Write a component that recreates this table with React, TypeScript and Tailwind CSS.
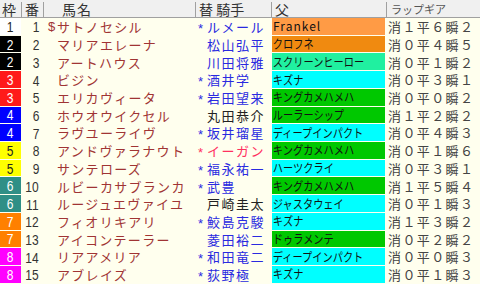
import React from "react";

type Row = {
  waku: number;
  no: number;
  mark: string;
  name: string;
  star: boolean;
  jockey: string;
  jockeyColor: string;
  sire: string;
  sireBg: string;
  lap: string;
};

const GREEN = "bg-[#00c800]";
const CYAN = "bg-[#00ffff]";
const BLUE = "text-[#2a2ae0]";

const rows: Row[] = [
  { waku: 1, no: 1, mark: "$", name: "サトノセシル", star: true, jockey: "ルメール", jockeyColor: BLUE, sire: "Frankel", sireBg: "bg-[#ff9b45]", lap: "消１平６瞬２" },
  { waku: 2, no: 2, mark: "", name: "マリアエレーナ", star: false, jockey: "松山弘平", jockeyColor: BLUE, sire: "クロフネ", sireBg: "bg-[#f08a10]", lap: "消０平４瞬５" },
  { waku: 2, no: 3, mark: "", name: "アートハウス", star: false, jockey: "川田将雅", jockeyColor: BLUE, sire: "スクリーンヒーロー", sireBg: "bg-[#20f0a0]", lap: "消０平１瞬２" },
  { waku: 3, no: 4, mark: "", name: "ビジン", star: true, jockey: "酒井学", jockeyColor: BLUE, sire: "キズナ", sireBg: CYAN, lap: "消０平３瞬１" },
  { waku: 3, no: 5, mark: "", name: "エリカヴィータ", star: true, jockey: "岩田望来", jockeyColor: BLUE, sire: "キングカメハメハ", sireBg: GREEN, lap: "消０平０瞬２" },
  { waku: 4, no: 6, mark: "", name: "ホウオウイクセル", star: false, jockey: "丸田恭介", jockeyColor: "text-[#222222]", sire: "ルーラーシップ", sireBg: GREEN, lap: "消１平２瞬２" },
  { waku: 4, no: 7, mark: "", name: "ラヴユーライヴ", star: true, jockey: "坂井瑠星", jockeyColor: BLUE, sire: "ディープインパクト", sireBg: CYAN, lap: "消０平４瞬３" },
  { waku: 5, no: 8, mark: "", name: "アンドヴァラナウト", star: true, jockey: "イーガン", jockeyColor: "text-[#ff3060]", sire: "キングカメハメハ", sireBg: GREEN, lap: "消０平１瞬６" },
  { waku: 5, no: 9, mark: "", name: "サンテローズ", star: true, jockey: "福永祐一", jockeyColor: BLUE, sire: "ハーツクライ", sireBg: CYAN, lap: "消０平３瞬１" },
  { waku: 6, no: 10, mark: "", name: "ルビーカサブランカ", star: true, jockey: "武豊", jockeyColor: BLUE, sire: "キングカメハメハ", sireBg: GREEN, lap: "消１平５瞬４" },
  { waku: 6, no: 11, mark: "", name: "ルージュエヴァイユ", star: false, jockey: "戸崎圭太", jockeyColor: "text-[#222222]", sire: "ジャスタウェイ", sireBg: CYAN, lap: "消０平１瞬３" },
  { waku: 7, no: 12, mark: "", name: "フィオリキアリ", star: true, jockey: "鮫島克駿", jockeyColor: BLUE, sire: "キズナ", sireBg: CYAN, lap: "消１平３瞬２" },
  { waku: 7, no: 13, mark: "", name: "アイコンテーラー", star: false, jockey: "菱田裕二", jockeyColor: BLUE, sire: "ドゥラメンテ", sireBg: GREEN, lap: "消０平２瞬２" },
  { waku: 8, no: 14, mark: "", name: "リアアメリア", star: true, jockey: "和田竜二", jockeyColor: BLUE, sire: "ディープインパクト", sireBg: CYAN, lap: "消０平０瞬３" },
  { waku: 8, no: 15, mark: "", name: "アブレイズ", star: true, jockey: "荻野極", jockeyColor: BLUE, sire: "キズナ", sireBg: CYAN, lap: "消０平１瞬３" },
];

const wakuStyle: Record<number, string> = {
  1: "bg-white text-[#222222]",
  2: "bg-black text-white",
  3: "bg-[#ff1a1a] text-white",
  4: "bg-[#0000ff] text-white",
  5: "bg-[#ffff00] text-[#222222]",
  6: "bg-[#2f8f86] text-white",
  7: "bg-[#ff8000] text-white",
  8: "bg-[#ff00ff] text-white",
};

const font = "font-['Noto_Sans_CJK_JP','Noto_Sans',sans-serif]";
const digits = "font-['Liberation_Sans',Arial,sans-serif]";

export default function App() {
  return (
    <div className={`w-[480px] h-[284px] overflow-hidden bg-[#ffffee] ${font}`}>
      {/* HEADER */}
      <div className="flex h-[18px] bg-[#f0f0f0] border-b border-[#a0a0a0] text-[#333333] leading-[14px] pt-[2px]">
        <div className="w-[22px] border-r border-[#a0a0a0] pl-[2px] text-[14px]">枠</div>
        <div className="w-[22px] border-r border-[#a0a0a0] pl-[3px] text-[14px]">番</div>
        <div className="w-[152px] border-r border-[#a0a0a0] pl-[18px] text-[14px] tracking-[1px]">馬名</div>
        <div className="w-[76px] border-r border-[#a0a0a0] pl-[3px] text-[14px] whitespace-pre">替 騎手</div>
        <div className="w-[115px] border-r border-[#a0a0a0] pl-[3px] text-[14px]">父</div>
        <div className="flex-1 pl-[4px] text-[11px] text-[#555555]">ラップギア</div>
      </div>

      {/* ROWS */}
      {rows.map((r) => (
        <div key={r.no} className="flex h-[17.73px] items-stretch">
          <div className={`w-[21px] mr-[1px] mb-px flex items-center justify-center ${wakuStyle[r.waku]}`}>
            <span className={`inline-block text-[15px] leading-none scale-x-[0.8] ${digits}`}>{r.waku}</span>
          </div>
          <div className="w-[17px] flex items-center justify-end text-[#333333]">
            <span className={`inline-block text-[15px] leading-none origin-right scale-x-[0.8] ${digits}`}>{r.no}</span>
          </div>
          <div className="w-[157px] flex items-center text-[#a03434] text-[13px] tracking-[1.3px] whitespace-nowrap">
            <span className={`w-[18px] pl-[9px] text-[13px] tracking-normal ${digits}`}>{r.mark}</span>
            <span>{r.name}</span>
          </div>
          <div className={`w-[76px] flex items-center text-[13px] tracking-[1.5px] whitespace-nowrap ${r.jockeyColor}`}>
            <span className={`w-[11px] pl-[2px] text-[13px] tracking-normal translate-y-[2px] ${digits}`}>{r.star ? "*" : ""}</span>
            <span>{r.jockey}</span>
          </div>
          <div className={`w-[113px] mb-px flex items-center whitespace-nowrap text-[#111111] ${r.sireBg}`}>
            {r.sire === "Frankel" ? (
              <span className="pl-[1px] text-[12px] tracking-[1px]">{r.sire}</span>
            ) : (
              <span className="inline-block origin-left scale-x-[0.85] text-[12px] pl-px">{r.sire}</span>
            )}
          </div>
          <div className="flex-1 flex items-center pl-[3px] text-[13px] tracking-[1.4px] text-[#444444] whitespace-nowrap">
            {r.lap}
          </div>
        </div>
      ))}
    </div>
  );
}
